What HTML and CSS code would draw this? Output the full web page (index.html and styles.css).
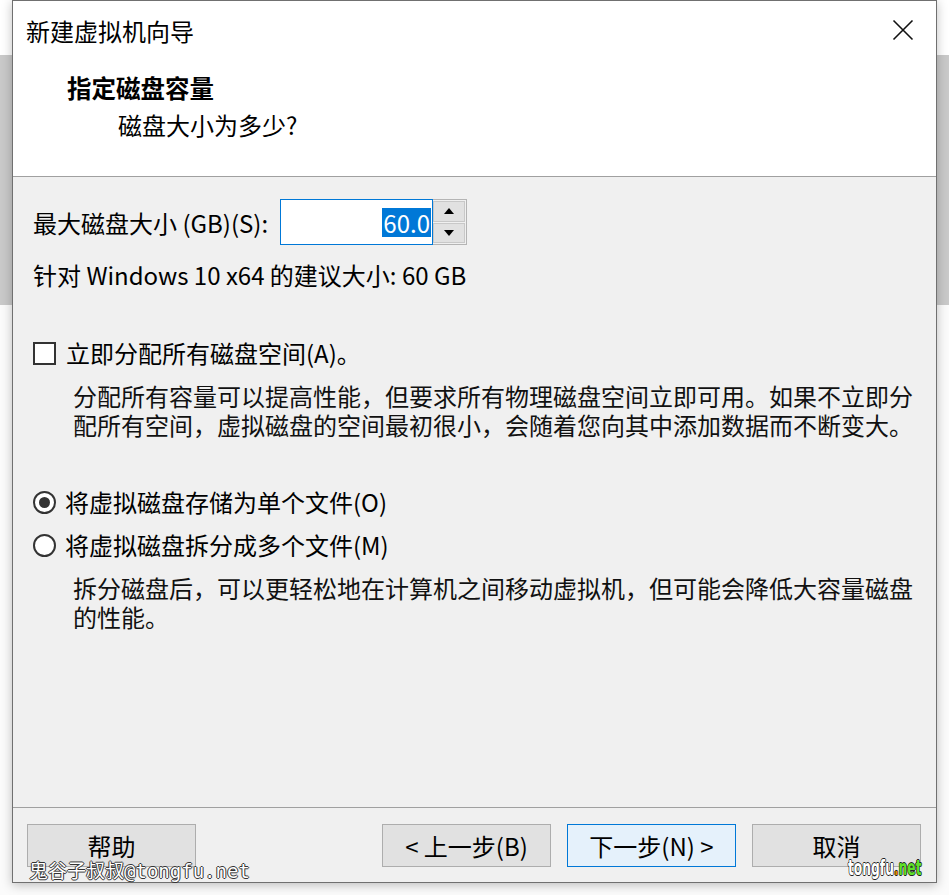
FILE: index.html
```html
<!DOCTYPE html>
<html lang="zh-CN">
<head>
    <meta charset="UTF-8">
    <title>新建虚拟机向导</title>
    <link rel="stylesheet" href="styles.css">
</head>
<body>

    <div class="dialog">
        <!-- Title bar -->
        <div class="titlebar">
            <span class="title">新建虚拟机向导</span>
            <svg class="close" width="22" height="22" viewBox="0 0 22 22">
                <path d="M1.5 1.5 L20.5 20.5 M20.5 1.5 L1.5 20.5" stroke="#111" stroke-width="1.6" fill="none"/>
            </svg>
        </div>

        <!-- Header -->
        <div class="header">
            <div class="header-title">指定磁盘容量</div>
            <div class="header-sub">磁盘大小为多少?</div>
        </div>

        <!-- Body -->
        <div class="content">
            <div class="size-row">
                <span class="size-label">最大磁盘大小 (GB)(S):</span>
                <div class="spinbox">
                    <div class="spin-field"><span class="selected">60.0</span></div>
                    <div class="spin-buttons">
                        <div class="spin-btn up"></div>
                        <div class="spin-btn down"></div>
                    </div>
                </div>
            </div>
            <p class="recommend">针对 Windows 10 x64 的建议大小: 60 GB</p>

            <label class="option option-first">
                <span class="checkbox"></span>
                <span>立即分配所有磁盘空间(A)。</span>
            </label>
            <p class="desc">分配所有容量可以提高性能，但要求所有物理磁盘空间立即可用。如果不立即分<br>配所有空间，虚拟磁盘的空间最初很小，会随着您向其中添加数据而不断变大。</p>

            <label class="option option-first">
                <span class="radio checked"></span>
                <span>将虚拟磁盘存储为单个文件(O)</span>
            </label>
            <label class="option">
                <span class="radio"></span>
                <span>将虚拟磁盘拆分成多个文件(M)</span>
            </label>
            <p class="desc">拆分磁盘后，可以更轻松地在计算机之间移动虚拟机，但可能会降低大容量磁盘<br>的性能。</p>
        </div>

        <!-- Footer -->
        <div class="footer">
            <button class="btn">帮助</button>
            <div class="spacer"></div>
            <button class="btn">&lt; 上一步(B)</button>
            <button class="btn primary">下一步(N) &gt;</button>
            <button class="btn">取消</button>
        </div>

        <div class="watermark">鬼谷子叔叔@tongfu.net</div>
        <div class="logo">tongfu<span class="dot">.</span><span class="net">net</span></div>
    </div>

</body>
</html>
```

FILE: styles.css
```css
body {
    margin: 0;
    padding: 0;
    font-family: "Noto Sans CJK SC", sans-serif;
    color: #000;
    background: linear-gradient(to bottom, #ffffff 0, #ffffff 55px, #c9c9c9 55px, #c9c9c9 305px, #fbfbfb 305px);
    height: 895px;
    overflow: hidden;
}

.dialog {
    position: relative;
    margin-left: 12px;
    width: 925px;
    height: 883px;
    box-sizing: border-box;
    border: 1px solid #707070;
    background: #f0f0f0;
    display: flex;
    flex-direction: column;
    box-shadow: 0 2px 10px rgba(0, 0, 0, 0.25);
}

/* Title bar */
.titlebar {
    height: 59px;
    background: #fff;
    display: flex;
    align-items: center;
    padding: 0 22px 0 13px;
}

.title {
    font-size: 24px;
    flex: 1;
}

.close {
    display: block;
    margin-top: -2px;
}

/* Header */
.header {
    height: 117px;
    box-sizing: border-box;
    background: #fff;
    border-bottom: 1px solid #a0a0a0;
    padding: 13px 0 0 54px;
}

.header-title {
    font-size: 24.5px;
    font-weight: 700;
    line-height: 30px;
}

.header-sub {
    font-size: 24px;
    line-height: 30px;
    margin: 7px 0 0 51px;
}

/* Body */
.content {
    flex: 1;
    padding: 22px 0 0 20px;
    font-size: 24px;
}

.size-row {
    display: flex;
    align-items: center;
    height: 46px;
}

.size-label {
    width: 247px;
}

.spinbox {
    display: flex;
    height: 46px;
}

.spin-field {
    width: 153px;
    box-sizing: border-box;
    border: 1px solid #0078d7;
    background: #fff;
    display: flex;
    align-items: center;
    justify-content: flex-end;
    padding-right: 1px;
}

.selected {
    background: #0078d7;
    color: #fff;
    font-size: 24px;
    line-height: 29px;
    padding: 0 1px 0 1px;
}

.spin-buttons {
    width: 34px;
    box-sizing: border-box;
    border: 1px solid #b4b4b4;
    border-left: none;
    display: flex;
    flex-direction: column;
    gap: 1px;
    padding: 1px 1px 1px 0;
    background: #f0f0f0;
}

.spin-btn {
    flex: 1;
    background: #e1e1e1;
    border: 1px solid #c8c8c8;
    display: flex;
    align-items: center;
    justify-content: center;
}

.spin-btn::before {
    content: "";
    border-left: 5px solid transparent;
    border-right: 5px solid transparent;
}

.up::before {
    border-bottom: 6px solid #000;
}

.down::before {
    border-top: 6px solid #000;
}

.recommend {
    margin: 15px 0 0 0;
    line-height: 30px;
}

.option {
    display: flex;
    align-items: center;
    line-height: 30px;
    gap: 10px;
    margin-top: 13px;
}

.option-first {
    margin-top: 48px;
}

.checkbox {
    width: 23px;
    height: 23px;
    box-sizing: border-box;
    border: 2px solid #333;
    background: #fff;
}

.radio {
    width: 23px;
    height: 23px;
    box-sizing: border-box;
    border: 2px solid #333;
    border-radius: 50%;
    background: #fff;
    display: flex;
    align-items: center;
    justify-content: center;
    margin-right: -1px;
}

.radio.checked::before {
    content: "";
    width: 11px;
    height: 11px;
    border-radius: 50%;
    background: #333;
}

.desc {
    margin: 13px 0 0 40px;
    line-height: 29px;
    color: #111;
    white-space: nowrap;
}

/* Footer */
.footer {
    height: 75px;
    box-sizing: border-box;
    border-top: 1px solid #a0a0a0;
    display: flex;
    align-items: flex-start;
    padding: 16px 15px 0 14px;
    gap: 16px;
}

.spacer {
    flex: 1;
}

.btn {
    width: 169px;
    height: 43px;
    background: #e1e1e1;
    border: 1px solid #adadad;
    font-family: "Noto Sans CJK SC", sans-serif;
    font-size: 24px;
    color: #000;
    padding: 0;
}

.btn.primary {
    background: #e5f1fb;
    border-color: #0078d7;
}

/* Watermarks */
.watermark {
    position: absolute;
    left: 16px;
    top: 855px;
    font-family: "DejaVu Sans Mono", "Noto Sans CJK SC", monospace;
    font-size: 19px;
    color: #fff;
    text-shadow: 1px 0 0 #333, -1px 0 0 #333, 0 1px 0 #333, 0 -1px 0 #333;
}

.logo {
    position: absolute;
    left: 835px;
    top: 856px;
    line-height: 22px;
    font-family: "DejaVu Sans Condensed", sans-serif;
    font-weight: 700;
    font-size: 22px;
    color: #fff;
    transform: scaleX(0.62);
    transform-origin: left center;
    text-shadow: 1px 0 0 #222, -1px 0 0 #222, 0 1px 0 #222, 0 -1px 0 #222;
}

.dot {
    color: #e08a00;
}

.net {
    color: #5ee02a;
}
```
